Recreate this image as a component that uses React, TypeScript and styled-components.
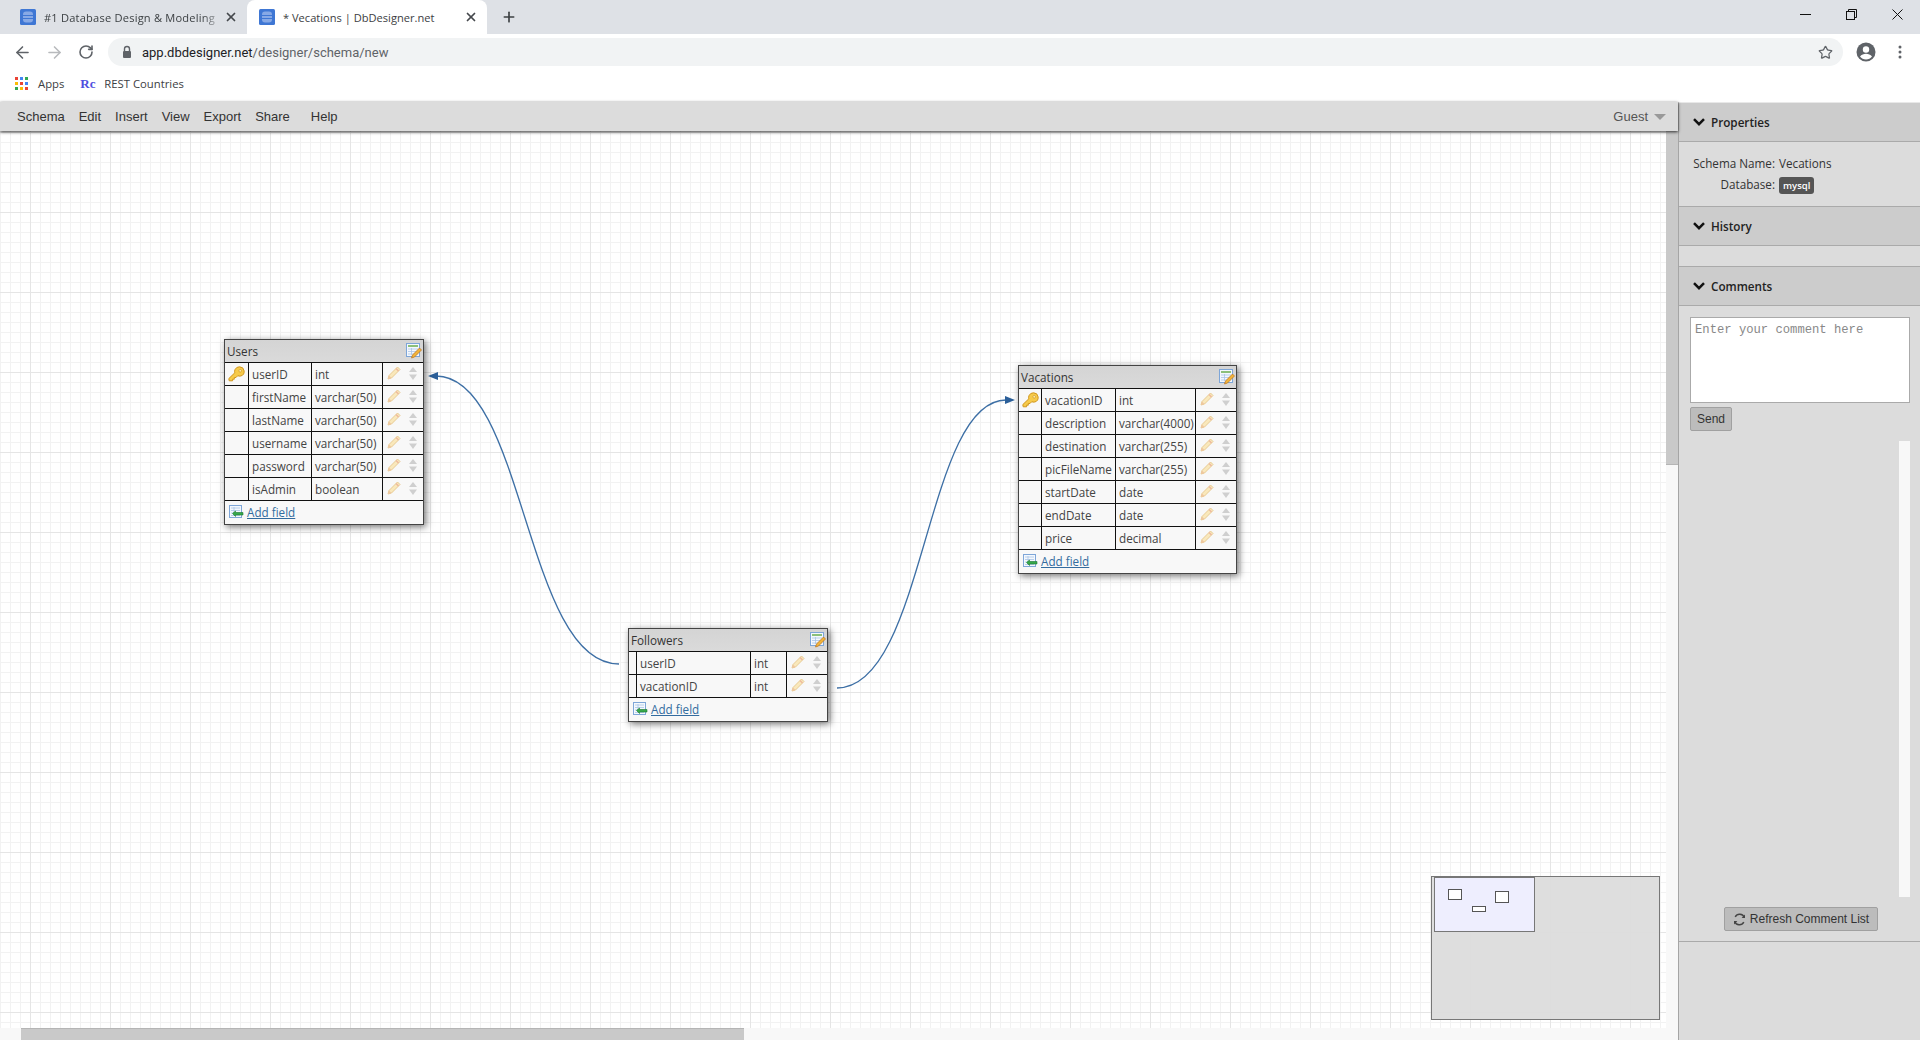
import React from "react";
import styled, { createGlobalStyle } from "styled-components";
import { ArrowLeft, ArrowRight, RotateCw, Star, X, Plus } from "lucide-react";

const UI_FONT = `"Open Sans", "Noto Sans", "Liberation Sans", sans-serif`;

const GlobalStyle = createGlobalStyle`
  html, body {
    margin: 0;
    padding: 0;
    overflow: hidden;
    background: #fff;
  }
  * {
    box-sizing: border-box;
  }
`;

const Page = styled.div`
  width: 1920px;
  height: 1040px;
  display: flex;
  flex-direction: column;
  overflow: hidden;
`;

/* browser chrome */
const TabStrip = styled.div`
  height: 34px;
  flex: none;
  background: #dee1e6;
  display: flex;
  align-items: flex-end;
  position: relative;
`;
const Tab = styled.div<{ $active?: boolean; $width: number }>`
  width: ${(p) => p.$width}px;
  height: 34px;
  flex: none;
  display: flex;
  align-items: center;
  padding: 0 9px 0 ${(p) => (p.$active ? 12 : 20)}px;
  background: ${(p) => (p.$active ? "#fff" : "transparent")};
  border-radius: 8px 8px 0 0;
  font: 11.1px ${UI_FONT};
  color: #3c4043;
`;
const TabTitle = styled.div<{ $fade?: boolean }>`
  flex: 1;
  margin-left: 8px;
  white-space: nowrap;
  ${(p) =>
    p.$fade &&
    `letter-spacing: 0.2px;
     -webkit-mask-image: linear-gradient(to right, #000 88%, transparent 100%);`}
`;
const NewTab = styled.div`
  width: 44px;
  height: 34px;
  display: flex;
  align-items: center;
  justify-content: center;
  color: #3c4043;
`;
const WindowControls = styled.div`
  margin-left: auto;
  align-self: flex-start;
  display: flex;
`;
const WindowButton = styled.div`
  width: 46px;
  height: 28px;
  display: flex;
  align-items: center;
  justify-content: center;
`;
const Toolbar = styled.div`
  height: 36px;
  flex: none;
  background: #fff;
  display: flex;
  align-items: center;
  padding-left: 6px;
`;
const NavButton = styled.div`
  width: 32px;
  height: 28px;
  display: flex;
  align-items: center;
  justify-content: center;
`;
const AddressBar = styled.div`
  width: 1735px;
  height: 28px;
  margin-left: 6px;
  border-radius: 14px;
  background: #f1f3f4;
  display: flex;
  align-items: center;
  padding: 0 10px 0 13px;
  font: 13px Roboto, "Liberation Sans", sans-serif;
  color: #5f6368;
`;
const Host = styled.span`
  color: #202124;
  margin-left: 9px;
`;
const AddressEnd = styled.div`
  margin-left: auto;
  display: flex;
  align-items: center;
`;
const ProfileSlot = styled.div`
  display: flex;
  align-items: center;
  margin-left: 13px;
  gap: 22px;
`;
const Bookmarks = styled.div`
  height: 32px;
  flex: none;
  background: #fff;
  display: flex;
  align-items: center;
  padding: 0 0 5px 15px;
  font: 11.3px ${UI_FONT};
  color: #3c4043;
`;
const Bookmark = styled.div<{ $gap: number }>`
  display: flex;
  align-items: center;
  gap: ${(p) => p.$gap}px;
  margin-right: 16px;
`;
const RcMark = styled.span`
  font: bold 13px "Liberation Serif", serif;
  color: #4f4fe0;
  width: 14px;
`;

/* app */
const Workspace = styled.div`
  flex: 1;
  min-height: 0;
  display: flex;
`;
const DesignerColumn = styled.div`
  width: 1678px;
  flex: none;
  display: flex;
  flex-direction: column;
`;
const MenuBar = styled.div`
  height: 29px;
  flex: none;
  background: #dcdcdc;
  display: flex;
  align-items: center;
  gap: 14px;
  padding: 0 12px 0 17px;
  font: 13px "Liberation Sans", Arial, sans-serif;
  color: #333;
  box-shadow: 0 1px 3px rgba(0, 0, 0, 0.8);
  position: relative;
  z-index: 3;
`;
const MenuItem = styled.span<{ $apart?: boolean }>`
  ${(p) => p.$apart && "margin-left: 7px;"}
`;
const GuestMenu = styled.div`
  margin-left: auto;
  display: flex;
  align-items: center;
  gap: 6px;
  color: #555;
`;
const Caret = styled.span`
  width: 0;
  height: 0;
  border-left: 6px solid transparent;
  border-right: 6px solid transparent;
  border-top: 6px solid #999;
`;
const ScrollRow = styled.div`
  flex: 1;
  min-height: 0;
  display: flex;
`;
const Canvas = styled.div`
  flex: 1;
  position: relative;
  overflow: hidden;
  background-color: #fff;
  background-image:
    linear-gradient(to right, #e5e5e5 1px, transparent 1px),
    linear-gradient(to bottom, #e5e5e5 1px, transparent 1px),
    linear-gradient(to right, #f2f2f2 1px, transparent 1px),
    linear-gradient(to bottom, #f2f2f2 1px, transparent 1px);
  background-size: 80px 80px, 80px 80px, 10px 10px, 10px 10px;
  background-position: 30px 0, 0 1px, 0 0, 0 1px;
`;
const VerticalTrack = styled.div`
  width: 12px;
  flex: none;
  background: #f8f8f8;
`;
const VerticalThumb = styled.div`
  height: 334px;
  background: #c9c9c9;
  border-bottom: 1px solid #b5b5b5;
`;
const HorizontalTrack = styled.div`
  height: 12px;
  flex: none;
  background: #f8f8f8;
  padding-left: 21px;
`;
const HorizontalThumb = styled.div`
  width: 723px;
  height: 12px;
  background: #c9c9c9;
  border-top: 1px solid #b5b5b5;
`;
const LinkLayer = styled.svg`
  position: absolute;
  inset: 0;
  width: 100%;
  height: 100%;
`;

/* table nodes */
const TableNode = styled.div<{ $x: number; $y: number; $width: number }>`
  position: absolute;
  left: ${(p) => p.$x}px;
  top: ${(p) => p.$y}px;
  width: ${(p) => p.$width}px;
  border: 1px solid #444;
  background: #f8f8f8;
  box-shadow: 2px 2px 7px rgba(0, 0, 0, 0.55);
  font: 11.7px ${UI_FONT};
  color: #444;
`;
const TableTitle = styled.div`
  height: 23px;
  background: linear-gradient(#d4d4d4, #dadada);
  border-bottom: 1px solid #111;
  display: flex;
  align-items: center;
  justify-content: space-between;
  padding: 0 1px 1px 2px;
  color: #333;
`;
const FieldRow = styled.div<{ $columns: string }>`
  height: 23px;
  display: grid;
  grid-template-columns: ${(p) => p.$columns};
  border-bottom: 1px solid #111;
`;
const FieldCell = styled.div`
  border-right: 1px solid #111;
  display: flex;
  align-items: center;
  padding: 0 0 1px 3px;
  white-space: nowrap;
  overflow: hidden;
`;
const KeyCell = styled.div`
  border-right: 1px solid #111;
  display: flex;
  align-items: center;
  justify-content: center;
`;
const ActionCell = styled.div`
  display: flex;
  align-items: center;
  padding: 0 0 2px 4px;
  gap: 7px;
`;
const AddField = styled.div`
  height: 23px;
  display: flex;
  align-items: center;
  padding: 0 0 1px 4px;
  gap: 3px;
`;
const AddLink = styled.a`
  color: #336c9f;
  text-decoration: underline;
`;

/* minimap */
const MiniMap = styled.div`
  position: absolute;
  right: 6px;
  bottom: 8px;
  width: 229px;
  height: 144px;
  border: 1px solid #777;
  background: rgba(220, 220, 220, 0.95);
`;
const MiniView = styled.div`
  position: absolute;
  left: 2px;
  top: 0;
  width: 101px;
  height: 55px;
  border: 1px solid #777;
  background: rgba(238, 238, 255, 0.95);
`;
const MiniTable = styled.div<{ $x: number; $y: number; $w: number; $h: number }>`
  position: absolute;
  left: ${(p) => p.$x}px;
  top: ${(p) => p.$y}px;
  width: ${(p) => p.$w}px;
  height: ${(p) => p.$h}px;
  border: 1px solid #555;
  background: #fff;
`;

/* side panel */
const SidePanel = styled.div`
  flex: 1;
  display: flex;
  flex-direction: column;
  background: #dcdcdc;
  border-left: 1px solid #a5a5a5;
  border-top: 1px solid #e8e8e8;
  font: 11.7px ${UI_FONT};
  color: #333;
`;
const PanelHeader = styled.div`
  height: 39px;
  flex: none;
  background: #cccccc;
  border-bottom: 1px solid #aaa;
  display: flex;
  align-items: center;
  gap: 6px;
  padding-left: 14px;
  font-weight: 600;
  color: #222;
`;
const PanelBody = styled.div<{ $height: number }>`
  height: ${(p) => p.$height}px;
  flex: none;
  border-bottom: 1px solid #aaa;
`;
const PropertyList = styled(PanelBody)`
  padding-top: 12px;
  display: grid;
  grid-template-columns: 82px 1fr;
  grid-auto-rows: 21px;
  column-gap: 4px;
  padding-left: 14px;
  white-space: nowrap;
`;
const PropertyLabel = styled.div`
  text-align: right;
  line-height: 18px;
`;
const PropertyValue = styled.div`
  line-height: 18px;
`;
const Badge = styled.span`
  display: inline-block;
  background: #555;
  color: #fff;
  border-radius: 3px;
  font: 600 9.5px ${UI_FONT};
  line-height: 17px;
  height: 17px;
  padding: 0 4px;
`;
const CommentBody = styled.div`
  height: 636px;
  flex: none;
  border-bottom: 1px solid #aaa;
  padding: 11px 10px 0 11px;
  display: flex;
  flex-direction: column;
`;
const CommentInput = styled.textarea`
  width: 220px;
  height: 86px;
  flex: none;
  resize: none;
  border: 1px solid #aaa;
  border-radius: 0;
  padding: 5px 4px;
  outline: none;
  background: #fff;
  font: 12.2px "Liberation Mono", monospace;
  &::placeholder {
    color: #888;
  }
`;
const PanelButton = styled.button`
  height: 24px;
  background: #bcbcbc;
  border: 1px solid #a0a0a0;
  border-radius: 2px;
  color: #333;
  font: 12px "Liberation Sans", Arial, sans-serif;
  display: inline-flex;
  align-items: center;
  justify-content: center;
  gap: 4px;
  padding: 0;
`;
const SendButton = styled(PanelButton)`
  width: 42px;
  margin-top: 4px;
  flex: none;
`;
const RefreshButton = styled(PanelButton)`
  width: 154px;
  margin: 10px 32px 0 auto;
  flex: none;
`;
const CommentList = styled.div`
  height: 456px;
  margin-top: 10px;
  flex: none;
  display: flex;
  justify-content: flex-end;
`;
const CommentTrack = styled.div`
  width: 11px;
  background: #f8f8f8;
`;

/* drawings */
const DbFavicon = () => (
  <svg width="16" height="16" viewBox="0 0 16 16">
    <rect width="16" height="16" rx="1.5" fill="#3f77d4" />
    <rect x="3" y="2.5" width="10" height="11" rx="3" fill="#87a9e6" />
    <path d="M3 6.5h10M3 9.5h10" stroke="#3f77d4" strokeWidth="1" />
  </svg>
);

const Lock = () => (
  <svg width="12" height="14" viewBox="0 0 12 14">
    <path d="M3.5 6V4a2.5 2.5 0 0 1 5 0v2" fill="none" stroke="#5f6368" strokeWidth="1.4" />
    <rect x="2" y="6" width="8" height="7" rx="1" fill="#5f6368" />
  </svg>
);

const Profile = () => (
  <svg width="20" height="20" viewBox="0 0 20 20">
    <circle cx="10" cy="10" r="9.5" fill="#5f6368" />
    <circle cx="10" cy="7.5" r="3.2" fill="#fff" />
    <path d="M4 14.6c1.4-2 3.8-2.8 6-2.8s4.6.8 6 2.8c-1.4 1.8-3.6 3-6 3s-4.6-1.2-6-3z" fill="#fff" />
  </svg>
);

const KebabDots = () => (
  <svg width="4" height="14" viewBox="0 0 4 14">
    <circle cx="2" cy="2" r="1.5" fill="#5f6368" />
    <circle cx="2" cy="7" r="1.5" fill="#5f6368" />
    <circle cx="2" cy="12" r="1.5" fill="#5f6368" />
  </svg>
);

const AppsGrid = () => {
  const colors = ["#ea4335", "#4285f4", "#34a853", "#fbbc05", "#ea4335", "#4285f4", "#34a853", "#fbbc05", "#ea4335"];
  return (
    <svg width="13" height="13" viewBox="0 0 13 13">
      {colors.map((c, i) => (
        <rect key={i} x={(i % 3) * 5} y={Math.floor(i / 3) * 5} width="3" height="3" fill={c} />
      ))}
    </svg>
  );
};

const KeyIcon = () => (
  <svg width="17" height="16" viewBox="0 0 17 16">
    <path
      d="M11.5.8a4.7 4.7 0 0 1 1.3 9.2c-1.2.3-2.2.1-3-.3L8 11.5H6.3v1.7H4.6v1.6H1.2L.8 12.6l6-5.8c-.4-1-.3-2.1.2-3.2A4.900 4.900 0 0 1 11.5.8z"
      fill="#f6ca4a"
      stroke="#d0961e"
      strokeWidth="1"
    />
    <circle cx="12.2" cy="4.8" r="1.3" fill="#fff2c0" stroke="#d0961e" strokeWidth=".7" />
  </svg>
);

const PencilIcon = () => (
  <svg width="14" height="14" viewBox="0 0 14 14">
    <path d="M10.5 1L13 3.5 4.5 12 1 13l1-3.500z" fill="#f9e8bb" stroke="#e8cb92" strokeWidth="1" />
    <path d="M1 13l1-3.500L4.500 12z" fill="#f0c6a0" />
    <path d="M9 2.500L11.500 5" stroke="#eeb89c" strokeWidth="1.400" />
  </svg>
);

const SortIcon = () => (
  <svg width="10" height="13" viewBox="0 0 10 13">
    <path d="M5 0l4 5H1z" fill="#cfcfcf" />
    <path d="M5 13L1 7.500h8z" fill="#cfcfcf" />
  </svg>
);

const TableEditIcon = () => (
  <svg width="16" height="16" viewBox="0 0 16 16">
    <rect x=".5" y=".5" width="13" height="13" fill="#f4f8fd" stroke="#7ea6d8" />
    <rect x="2" y="2" width="10" height="2" fill="#8cc07a" />
    <path d="M2 6h10M2 8.500h10M2 11h10M5.500 5v7" stroke="#a9c4e6" strokeWidth=".8" />
    <path d="M13.500 5l2 2-7 7-3 1 1-3z" fill="#f2b43a" stroke="#b9701a" strokeWidth=".7" />
  </svg>
);

const AddFieldIcon = () => (
  <svg width="15" height="14" viewBox="0 0 15 14">
    <rect x=".5" y=".5" width="12" height="12" fill="#f4f8fd" stroke="#7ea6d8" />
    <path d="M2 3h9M2 5.500h9M2 8h9M2 10.500h9M5 2v9" stroke="#a9c4e6" strokeWidth=".8" />
    <path d="M3.500 8.500l3-2.500v1.500H14v2.500H6.500V11.500z" fill="#37a84a" stroke="#1d7a30" strokeWidth=".6" />
  </svg>
);

const Chevron = () => (
  <svg width="12" height="8" viewBox="0 0 12 8">
    <path d="M1 1.200l5 5 5-5" fill="none" stroke="#111" strokeWidth="2.500" />
  </svg>
);

const RefreshIcon = () => (
  <svg width="13" height="13" viewBox="0 0 13 13">
    <path d="M11.300 4.500A5 5 0 0 0 2.200 3.800M1.700 8.500a5 5 0 0 0 9.100.7" fill="none" stroke="#444" strokeWidth="1.500" />
    <path d="M12 1.500v3.600H8.600zM1 11.500V7.900h3.400z" fill="#444" />
  </svg>
);

type Field = { name: string; type: string; key?: boolean };
type TableDef = { title: string; x: number; y: number; width: number; columns: string; fields: Field[] };

const tables: TableDef[] = [
  {
    title: "Users",
    x: 224,
    y: 208,
    width: 200,
    columns: "24px 63px 71px 40px",
    fields: [
      { name: "userID", type: "int", key: true },
      { name: "firstName", type: "varchar(50)" },
      { name: "lastName", type: "varchar(50)" },
      { name: "username", type: "varchar(50)" },
      { name: "password", type: "varchar(50)" },
      { name: "isAdmin", type: "boolean" },
    ],
  },
  {
    title: "Vacations",
    x: 1018,
    y: 234,
    width: 219,
    columns: "23px 74px 80px 40px",
    fields: [
      { name: "vacationID", type: "int", key: true },
      { name: "description", type: "varchar(4000)" },
      { name: "destination", type: "varchar(255)" },
      { name: "picFileName", type: "varchar(255)" },
      { name: "startDate", type: "date" },
      { name: "endDate", type: "date" },
      { name: "price", type: "decimal" },
    ],
  },
  {
    title: "Followers",
    x: 628,
    y: 497,
    width: 200,
    columns: "8px 114px 36px 40px",
    fields: [
      { name: "userID", type: "int" },
      { name: "vacationID", type: "int" },
    ],
  },
];

const SchemaTable = ({ table }: { table: TableDef }) => (
  <TableNode $x={table.x} $y={table.y} $width={table.width}>
    <TableTitle>
      {table.title}
      <TableEditIcon />
    </TableTitle>
    {table.fields.map((f) => (
      <FieldRow key={f.name} $columns={table.columns}>
        <KeyCell>{f.key && <KeyIcon />}</KeyCell>
        <FieldCell>{f.name}</FieldCell>
        <FieldCell>{f.type}</FieldCell>
        <ActionCell>
          <PencilIcon />
          <SortIcon />
        </ActionCell>
      </FieldRow>
    ))}
    <AddField>
      <AddFieldIcon />
      <AddLink href="#">Add field</AddLink>
    </AddField>
  </TableNode>
);

const Links = () => (
  <LinkLayer>
    <path d="M619 533 C 525 533 525 245 436 245" fill="none" stroke="#3d6fa5" strokeWidth="1.3" />
    <path d="M428 245 L438 241 L438 249 Z" fill="#2b5f99" />
    <path d="M837 557 C 925 557 925 269 1006 269" fill="none" stroke="#3d6fa5" strokeWidth="1.3" />
    <path d="M1015 269 L1005 265 L1005 273 Z" fill="#2b5f99" />
  </LinkLayer>
);

export default function App() {
  return (
    <Page>
      <GlobalStyle />
      <TabStrip>
        <Tab $width={247}>
          <DbFavicon />
          <TabTitle $fade>#1 Database Design &amp; Modeling</TabTitle>
          <X size={14} strokeWidth={3} color="#45484c" />
        </Tab>
        <Tab $active $width={240}>
          <DbFavicon />
          <TabTitle>* Vecations | DbDesigner.net</TabTitle>
          <X size={14} strokeWidth={3} color="#45484c" />
        </Tab>
        <NewTab>
          <Plus size={16} strokeWidth={2.5} />
        </NewTab>
        <WindowControls>
          <WindowButton>
            <svg width="11" height="11" viewBox="0 0 11 11">
              <path d="M0 5.5h11" stroke="#111" />
            </svg>
          </WindowButton>
          <WindowButton>
            <svg width="11" height="11" viewBox="0 0 11 11">
              <rect x=".5" y="2.5" width="8" height="8" fill="none" stroke="#111" />
              <path d="M2.5 2.5V.5h8v8h-2" fill="none" stroke="#111" />
            </svg>
          </WindowButton>
          <WindowButton>
            <svg width="11" height="11" viewBox="0 0 11 11">
              <path d="M.5.5l10 10M10.5.5l-10 10" stroke="#111" />
            </svg>
          </WindowButton>
        </WindowControls>
      </TabStrip>
      <Toolbar>
        <NavButton>
          <ArrowLeft size={19} color="#5f6368" strokeWidth={2} />
        </NavButton>
        <NavButton>
          <ArrowRight size={19} color="#b8babd" strokeWidth={2} />
        </NavButton>
        <NavButton>
          <RotateCw size={16} color="#5f6368" strokeWidth={2.4} />
        </NavButton>
        <AddressBar>
          <Lock />
          <Host>app.dbdesigner.net</Host>/designer/schema/new
          <AddressEnd>
            <Star size={15} color="#5f6368" strokeWidth={2} />
          </AddressEnd>
        </AddressBar>
        <ProfileSlot>
          <Profile />
          <KebabDots />
        </ProfileSlot>
      </Toolbar>
      <Bookmarks>
        <Bookmark $gap={10}>
          <AppsGrid />
          Apps
        </Bookmark>
        <Bookmark $gap={10}>
          <RcMark>Rc</RcMark>
          REST Countries
        </Bookmark>
      </Bookmarks>
      <Workspace>
        <DesignerColumn>
          <MenuBar>
            <MenuItem>Schema</MenuItem>
            <MenuItem>Edit</MenuItem>
            <MenuItem>Insert</MenuItem>
            <MenuItem>View</MenuItem>
            <MenuItem>Export</MenuItem>
            <MenuItem>Share</MenuItem>
            <MenuItem $apart>Help</MenuItem>
            <GuestMenu>
              Guest
              <Caret />
            </GuestMenu>
          </MenuBar>
          <ScrollRow>
            <Canvas>
              <Links />
              {tables.map((t) => (
                <SchemaTable key={t.title} table={t} />
              ))}
              <MiniMap>
                <MiniView />
                <MiniTable $x={16} $y={12} $w={14} $h={11} />
                <MiniTable $x={63} $y={14} $w={14} $h={12} />
                <MiniTable $x={40} $y={29} $w={14} $h={6} />
              </MiniMap>
            </Canvas>
            <VerticalTrack>
              <VerticalThumb />
            </VerticalTrack>
          </ScrollRow>
          <HorizontalTrack>
            <HorizontalThumb />
          </HorizontalTrack>
        </DesignerColumn>
        <SidePanel>
          <PanelHeader>
            <Chevron />
            Properties
          </PanelHeader>
          <PropertyList as="div" $height={65}>
            <PropertyLabel>Schema Name:</PropertyLabel>
            <PropertyValue>Vecations</PropertyValue>
            <PropertyLabel>Database:</PropertyLabel>
            <PropertyValue>
              <Badge>mysql</Badge>
            </PropertyValue>
          </PropertyList>
          <PanelHeader>
            <Chevron />
            History
          </PanelHeader>
          <PanelBody $height={21} />
          <PanelHeader>
            <Chevron />
            Comments
          </PanelHeader>
          <CommentBody>
            <CommentInput placeholder="Enter your comment here" />
            <SendButton>Send</SendButton>
            <CommentList>
              <CommentTrack />
            </CommentList>
            <RefreshButton>
              <RefreshIcon />
              Refresh Comment List
            </RefreshButton>
          </CommentBody>
        </SidePanel>
      </Workspace>
    </Page>
  );
}
